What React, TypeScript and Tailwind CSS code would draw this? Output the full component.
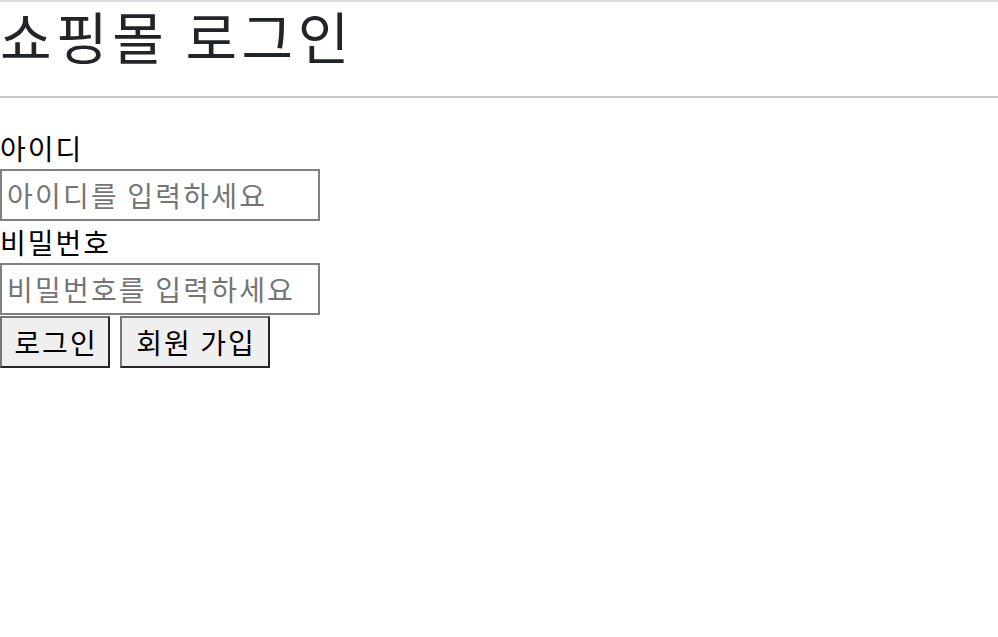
export default function App() {
  return (
    <div
      className="min-h-screen bg-white text-black"
      style={{ fontFamily: '"Noto Sans CJK KR", "Noto Sans", sans-serif' }}
    >
      <div className="border-t-2 border-[#dcdce0]" />
      <h1 className="-mt-[8px] text-[56px] leading-[82px] font-normal tracking-[4.6px] text-[#212529]">쇼핑몰 로그인</h1>
      <div className="mt-[20px] border-b-2 border-[#c8c8c8]" />

      <form className="mt-[29px] flex flex-col items-start tracking-[2px]" onSubmit={(e) => e.preventDefault()}>
        <label htmlFor="userId" className="text-[28px] leading-[42px]">
          아이디
        </label>
        <input
          id="userId"
          type="text"
          placeholder="아이디를 입력하세요"
          className="h-[52px] w-[320px] border-2 border-[#808080] pl-[5px] pr-[3px] text-[28px] tracking-[2.2px] placeholder:text-[#757575] outline-none"
        />
        <label htmlFor="userPw" className="text-[28px] leading-[42px]">
          비밀번호
        </label>
        <input
          id="userPw"
          type="password"
          placeholder="비밀번호를 입력하세요"
          className="h-[52px] w-[320px] border-2 border-[#808080] pl-[5px] pr-[3px] text-[28px] tracking-[2.2px] placeholder:text-[#757575] outline-none"
        />
        <div className="mt-px flex gap-[10px]">
          <button
            type="submit"
            className="h-[52px] w-[110px] border-2 border-t-[#767676] border-l-[#767676] border-r-[#262626] border-b-[#262626] bg-[#efefef] pl-[2px] text-[28px] leading-none tracking-[2px]"
          >
            로그인
          </button>
          <button
            type="button"
            className="h-[52px] w-[150px] border-2 border-t-[#767676] border-l-[#767676] border-r-[#262626] border-b-[#262626] bg-[#efefef] pl-[2px] text-[28px] leading-none tracking-[2px]"
          >
            회원 가입
          </button>
        </div>
      </form>
    </div>
  );
}
